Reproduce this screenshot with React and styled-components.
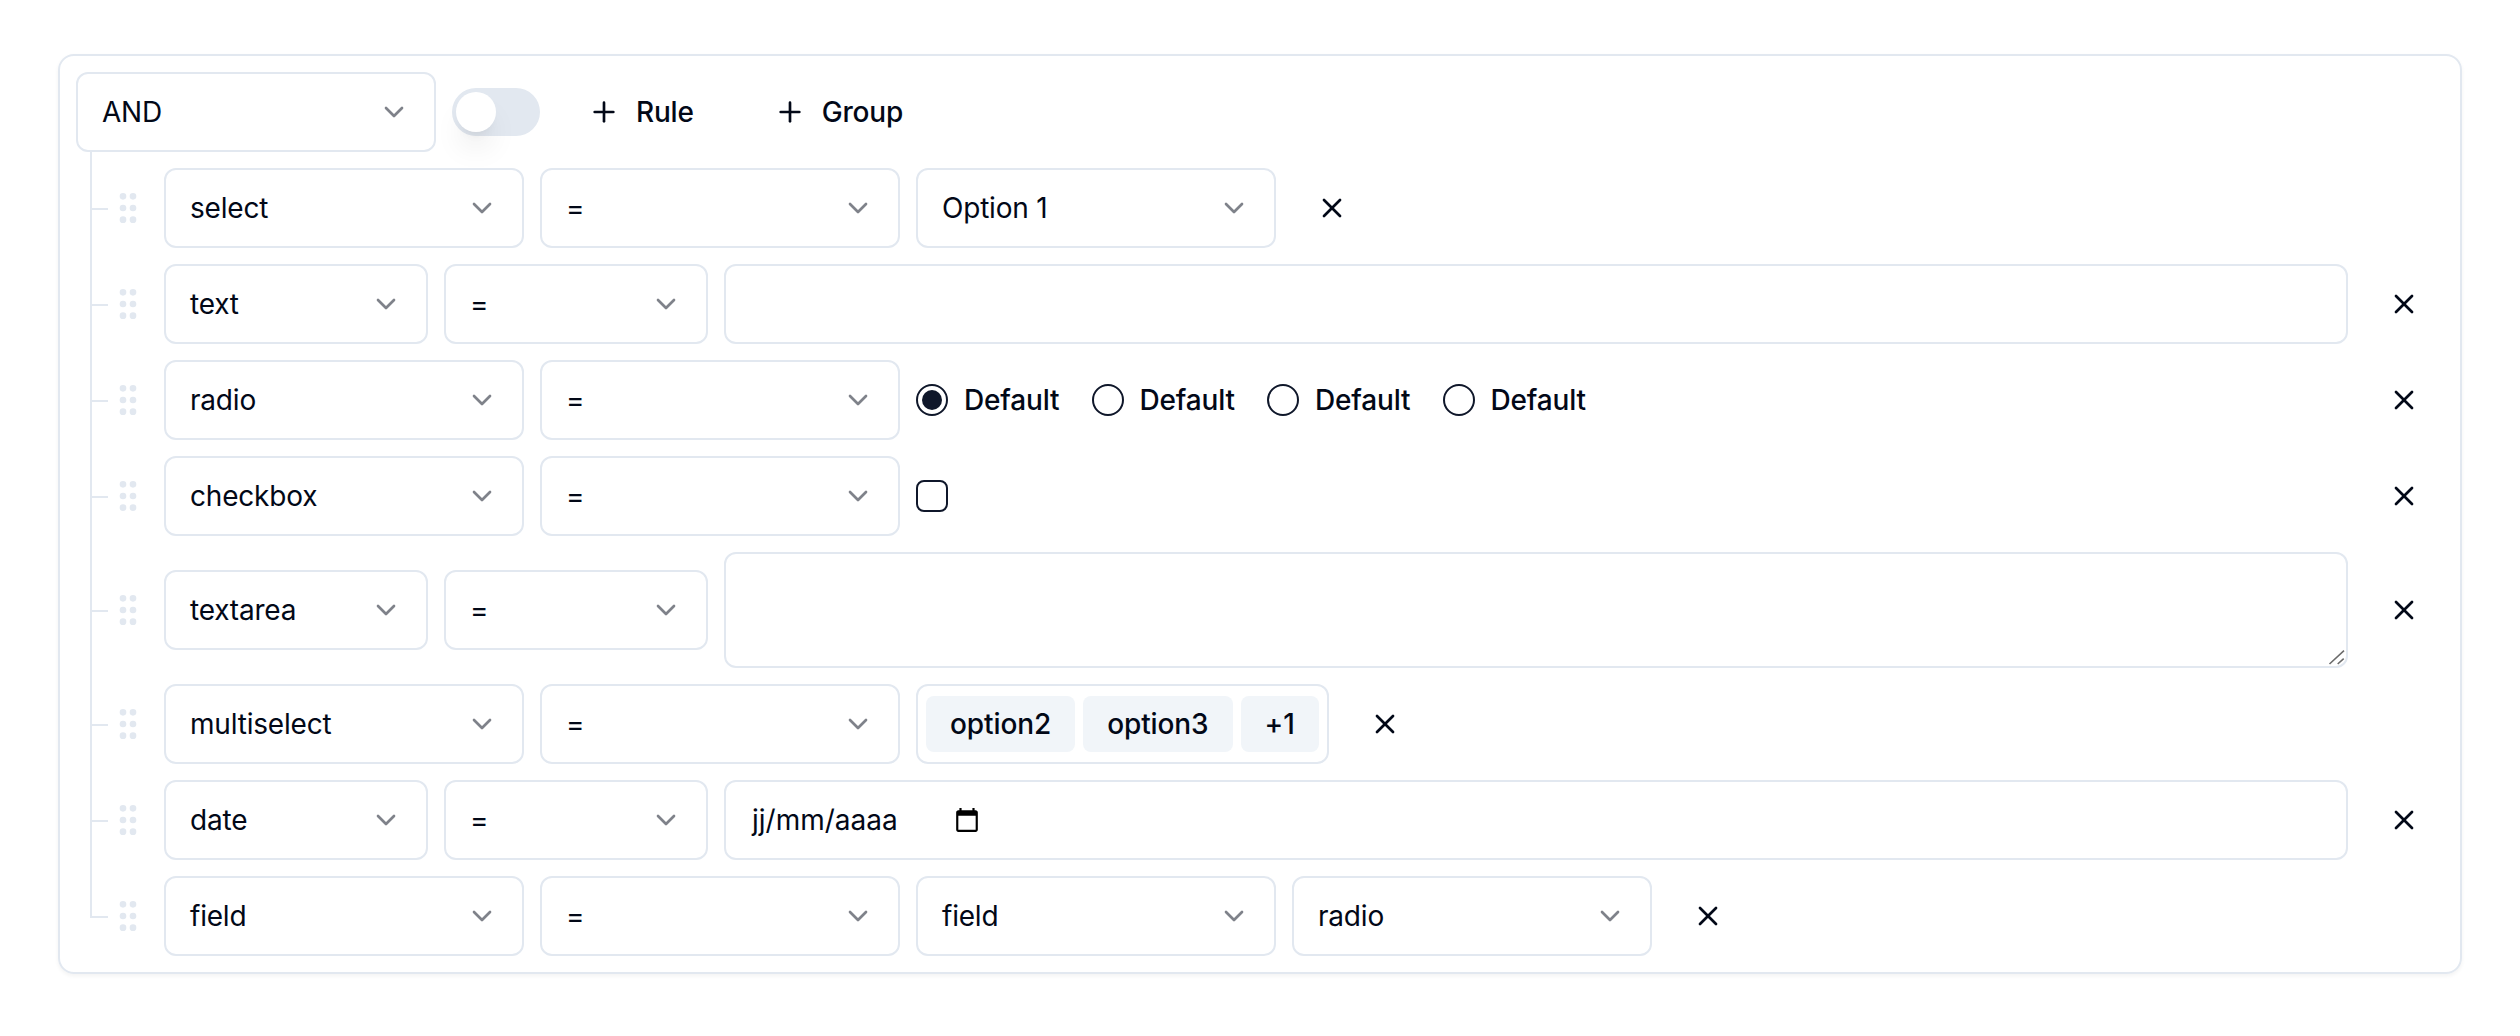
import React from 'react';
import styled, { createGlobalStyle } from 'styled-components';
import { ChevronDown, GripVertical, Plus, X } from 'lucide-react';

const GlobalStyle = createGlobalStyle`
    * {
        box-sizing: border-box;
    }
    body {
        margin: 0;
        background: #fff;
        color: #020817;
        font-family: Inter, "Liberation Sans", sans-serif;
        font-size: 28px;
        letter-spacing: -0.2px;
    }
`;

const Page = styled.div`
    padding: 54px 58px;
`;

const Builder = styled.div`
    display: flex;
    flex-direction: column;
    gap: 16px;
    padding: 16px;
    border: 2px solid #e2e8f0;
    border-radius: 16px;
    box-shadow: 0 2px 4px rgba(0, 0, 0, 0.05);
`;

const Header = styled.div`
    display: flex;
    align-items: center;
    gap: 16px;
`;

const Rules = styled.div`
    display: flex;
    flex-direction: column;
    gap: 16px;
    padding-left: 32px;
`;

const Row = styled.div`
    position: relative;
    display: flex;
    align-items: center;
    gap: 16px;

    &::before {
        content: '';
        position: absolute;
        left: -18px;
        top: -16px;
        width: 16px;
        height: calc(50% + 16px);
        border-left: 2px solid #e2e8f0;
        border-bottom: 2px solid #e2e8f0;
    }

    &:not(:last-child)::after {
        content: '';
        position: absolute;
        left: -18px;
        top: 50%;
        bottom: 0;
        border-left: 2px solid #e2e8f0;
    }
`;

const SelectBox = styled.button`
    display: flex;
    flex: none;
    align-items: center;
    justify-content: space-between;
    width: ${props => props.$width}px;
    height: 80px;
    padding: 0 24px;
    border: 2px solid #e2e8f0;
    border-radius: 12px;
    background: #fff;
    color: inherit;
    font: inherit;
    letter-spacing: inherit;

    svg {
        opacity: 0.5;
    }
`;

const Toggle = styled.div`
    display: flex;
    flex: none;
    width: 88px;
    height: 48px;
    padding: 4px;
    border-radius: 24px;
    background: #e2e8f0;
`;

const Thumb = styled.span`
    width: 40px;
    height: 40px;
    border-radius: 50%;
    background: #fff;
    box-shadow: 0 20px 30px -6px rgba(0, 0, 0, 0.1),
        0 8px 12px -8px rgba(0, 0, 0, 0.1);
`;

const AddButton = styled.button`
    display: flex;
    align-items: center;
    gap: 16px;
    height: 80px;
    padding: 0 32px;
    border: 0;
    border-radius: 12px;
    background: transparent;
    color: inherit;
    font: inherit;
    font-weight: 500;
    letter-spacing: inherit;
`;

const DeleteButton = styled.button`
    display: flex;
    flex: none;
    align-items: center;
    justify-content: center;
    width: 80px;
    height: 80px;
    padding: 0;
    border: 0;
    background: transparent;
    color: inherit;
`;

const Handle = styled(GripVertical)`
    flex: none;
    color: #e2e8f0;
`;

const TextInput = styled.input`
    flex: 1;
    min-width: 0;
    height: 80px;
    padding: 0 24px;
    border: 2px solid #e2e8f0;
    border-radius: 12px;
    background: #fff;
    color: inherit;
    font: inherit;
    outline: none;
`;

const TextAreaWrap = styled.div`
    position: relative;
    flex: 1;
    min-width: 0;
`;

const TextArea = styled.textarea`
    display: block;
    width: 100%;
    height: 116px;
    padding: 16px 24px;
    border: 2px solid #e2e8f0;
    border-radius: 12px;
    background: #fff;
    color: inherit;
    font: inherit;
    outline: none;
    resize: none;
`;

const ResizeGrip = styled.svg`
    position: absolute;
    right: 2px;
    bottom: 2px;
    width: 18px;
    height: 16px;
`;

const DateField = styled.div`
    display: flex;
    flex: 1;
    align-items: center;
    height: 80px;
    padding: 0 24px 0 26px;
    border: 2px solid #e2e8f0;
    border-radius: 12px;
    letter-spacing: 0;
`;

const CalendarIcon = styled.svg`
    width: 26px;
    height: 26px;
    margin-left: 56px;
`;

const RadioGroup = styled.div`
    display: flex;
    align-items: center;
    gap: 32px;
`;

const RadioItem = styled.label`
    display: flex;
    align-items: center;
    gap: 16px;
    font-weight: 500;
    letter-spacing: -0.15px;
`;

const RadioCircle = styled.span`
    display: flex;
    align-items: center;
    justify-content: center;
    width: 32px;
    height: 32px;
    border: 2px solid #0f172a;
    border-radius: 50%;

    &::after {
        content: '';
        display: ${props => (props.$checked ? 'block' : 'none')};
        width: 20px;
        height: 20px;
        border-radius: 50%;
        background: #0f172a;
    }
`;

const CheckBox = styled.span`
    width: 32px;
    height: 32px;
    border: 2px solid #0f172a;
    border-radius: 8px;
`;

const MultiSelect = styled.div`
    display: flex;
    flex: none;
    align-items: center;
    gap: 8px;
    height: 80px;
    padding: 0 8px;
    border: 2px solid #e2e8f0;
    border-radius: 12px;
`;

const Chip = styled.span`
    display: flex;
    align-items: center;
    height: 56px;
    padding: 0 24px;
    border-radius: 8px;
    background: #f1f5f9;
    font-weight: 500;
    letter-spacing: -0.1px;
`;

const Spacer = styled.div`
    flex: 1;
`;

const Select = ({ width = 360, children }) => (
    <SelectBox $width={width}>
        {children}
        <ChevronDown size={32} />
    </SelectBox>
);

const Rule = ({ field, narrow, children }) => (
    <Row>
        <Handle size={40} />
        <Select width={narrow ? 264 : 360}>{field}</Select>
        <Select width={narrow ? 264 : 360}>=</Select>
        {children}
        <DeleteButton>
            <X size={32} />
        </DeleteButton>
    </Row>
);

export default function App() {
    return (
        <Page>
            <GlobalStyle />
            <Builder>
                <Header>
                    <Select>AND</Select>
                    <Toggle>
                        <Thumb />
                    </Toggle>
                    <AddButton>
                        <Plus size={32} />
                        Rule
                    </AddButton>
                    <AddButton>
                        <Plus size={32} />
                        Group
                    </AddButton>
                </Header>
                <Rules>
                    <Rule field="select">
                        <Select>Option 1</Select>
                    </Rule>
                    <Rule field="text" narrow>
                        <TextInput />
                    </Rule>
                    <Rule field="radio">
                        <RadioGroup>
                            {[true, false, false, false].map((checked, i) => (
                                <RadioItem key={i}>
                                    <RadioCircle $checked={checked} />
                                    Default
                                </RadioItem>
                            ))}
                        </RadioGroup>
                        <Spacer />
                    </Rule>
                    <Rule field="checkbox">
                        <CheckBox />
                        <Spacer />
                    </Rule>
                    <Rule field="textarea" narrow>
                        <TextAreaWrap>
                            <TextArea />
                            <ResizeGrip viewBox="0 0 18 16">
                                <path
                                    d="M1.5 14L16 .6M9.7 14l6-5.3"
                                    stroke="#6b6b6b"
                                    strokeWidth="1.6"
                                    fill="none"
                                />
                            </ResizeGrip>
                        </TextAreaWrap>
                    </Rule>
                    <Rule field="multiselect">
                        <MultiSelect>
                            <Chip>option2</Chip>
                            <Chip>option3</Chip>
                            <Chip>+1</Chip>
                        </MultiSelect>
                    </Rule>
                    <Rule field="date" narrow>
                        <DateField>
                            jj/mm/aaaa
                            <CalendarIcon viewBox="0 0 24 24">
                                <path d="M20 3h-1V1h-2v2H7V1H5v2H4c-1.1 0-2 .9-2 2v16c0 1.1.9 2 2 2h16c1.1 0 2-.9 2-2V5c0-1.1-.9-2-2-2zm0 18H4V8h16v13z" />
                            </CalendarIcon>
                        </DateField>
                    </Rule>
                    <Rule field="field">
                        <Select>field</Select>
                        <Select>radio</Select>
                    </Rule>
                </Rules>
            </Builder>
        </Page>
    );
}
